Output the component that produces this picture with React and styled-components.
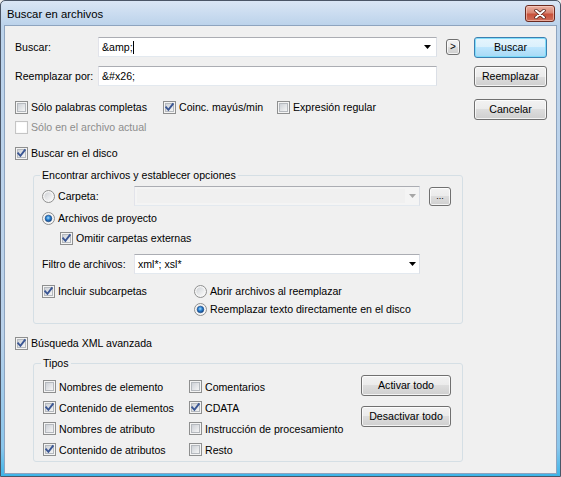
import React from "react";
import styled, { createGlobalStyle } from "styled-components";

const GlobalStyle = createGlobalStyle`
  html, body {
    margin: 0;
    padding: 0;
    background: #f0f0f0;
  }
  body {
    font-family: "Liberation Sans", Arial, sans-serif;
    font-size: 10.6px;
    color: #000;
  }
  * {
    box-sizing: border-box;
  }
`;

const Window = styled.div`
  width: 561px;
  height: 477px;
  border: 1px solid #4b5667;
  border-radius: 5px 5px 0 0;
  background: linear-gradient(
    to bottom,
    #dae6f5 0,
    #bcd3eb 24px,
    #b9d1ea 70%,
    #8ac6ec 94%,
    #3db5e8 100%
  );
  display: flex;
  flex-direction: column;
  overflow: hidden;
`;

const TitleBar = styled.div`
  height: 24px;
  flex-shrink: 0;
  display: flex;
  align-items: flex-start;
  justify-content: space-between;
  padding: 0 5px 0 6px;
`;

const Title = styled.span`
  font-size: 11.3px;
  line-height: 26px;
  color: #000;
`;

const CloseButton = styled.div`
  width: 30px;
  height: 17px;
  margin-top: 4px;
  border: 1px solid #6b2a20;
  border-radius: 3px;
  background: linear-gradient(#eab1a4, #d98673 45%, #c7513b 55%, #d0705c);
  box-shadow: inset 0 0 0 1px rgba(255, 220, 210, 0.55);
  display: flex;
  align-items: center;
  justify-content: center;
`;

const Client = styled.div`
  flex: 1;
  margin: 0 3px 2px;
  border: 1px solid #8ea4bf;
  background: #f0f0f0;
  display: flex;
  gap: 9px;
  padding: 11px 9px 0 10px;
`;

const MainColumn = styled.div`
  width: 450px;
  display: flex;
  flex-direction: column;
`;

const ButtonColumn = styled.div`
  width: 73px;
  display: flex;
  flex-direction: column;
`;

const Row = styled.div`
  display: flex;
  align-items: ${(p) => p.$align || "center"};
  height: ${(p) => (p.$h ? p.$h + "px" : "auto")};
  margin-top: ${(p) => p.$mt || 0}px;
  margin-left: ${(p) => p.$ml || 0}px;
`;

const FieldLabel = styled.span`
  width: ${(p) => p.$w}px;
  flex-shrink: 0;
  white-space: nowrap;
`;

const TextBox = styled.div`
  width: ${(p) => p.$w}px;
  height: 20px;
  flex-shrink: 0;
  border: 1px solid;
  border-color: #abadb3 #dbdfe6 #e3e9ef #e2e3ea;
  background: ${(p) => (p.$disabled ? "#f4f4f4" : "#fff")};
  display: flex;
  align-items: center;
  padding-left: 3px;
  white-space: nowrap;
`;

const BoxText = styled.span`
  flex: 1;
  display: flex;
  align-items: center;
`;

const DisabledField = styled.span`
  flex: 1;
  height: 14px;
  margin-left: -1px;
  background: #f0f0f0;
`;

const Caret = styled.span`
  display: inline-block;
  width: 1px;
  height: 13px;
  background: #000;
`;

const ArrowSlot = styled.span`
  width: ${(p) => p.$w}px;
  height: 100%;
  flex-shrink: 0;
  display: flex;
  align-items: center;
  justify-content: center;
`;

const PushButton = styled.button`
  width: ${(p) => p.$w}px;
  height: ${(p) => p.$h || 21}px;
  margin-top: ${(p) => p.$mt || 0}px;
  margin-left: ${(p) => p.$ml || 0}px;
  flex-shrink: 0;
  padding: 0;
  font: inherit;
  font-size: ${(p) => p.$fs || "inherit"};
  color: #000;
  border: 1px solid ${(p) => (p.$default ? "#3c7fb1" : "#707070")};
  border-radius: 3px;
  background: ${(p) =>
    p.$default
      ? "linear-gradient(#e6f5fd, #d9f0fc 50%, #bee6fd 50%, #a7d9f5)"
      : "linear-gradient(#f2f2f2, #ebebeb 50%, #dddddd 50%, #cfcfcf)"};
  box-shadow: inset 0 0 0 1px
    ${(p) => (p.$default ? "rgba(120, 220, 250, 0.9)" : "rgba(255, 255, 255, 0.75)")};
  display: flex;
  align-items: center;
  justify-content: center;
  line-height: 1;
`;

const OptionItem = styled.span`
  display: flex;
  align-items: center;
  gap: 3px;
  height: ${(p) => p.$h || 20}px;
  width: ${(p) => (p.$w ? p.$w + "px" : "auto")};
  flex-shrink: 0;
  margin-left: ${(p) => p.$ml || 0}px;
  margin-top: ${(p) => p.$mt || 0}px;
  color: ${(p) => (p.$disabled ? "#8d8d8d" : "#000")};
  white-space: nowrap;
  svg {
    flex-shrink: 0;
  }
`;

const Group = styled.fieldset`
  width: 430px;
  min-width: 0;
  margin: ${(p) => p.$mt}px 0 0 18px;
  padding: ${(p) => p.$pad};
  border: 1px solid #d5dfe5;
  border-radius: 3px;
`;

const GroupTitle = styled.legend`
  padding: 0 2px;
  margin-left: -2px;
  line-height: 14px;
  font-size: 10.6px;
`;

const Column = styled.div`
  display: flex;
  flex-direction: column;
  gap: ${(p) => p.$gap || 0}px;
  margin-top: ${(p) => p.$mt || 0}px;
`;

const TypesGrid = styled.div`
  display: grid;
  grid-template-columns: 146px 172px 90px;
  align-items: start;
`;

function CheckBox({ checked, disabled }) {
  const outer = disabled ? "#c5c5c5" : "#8e8f8f";
  return (
    <svg width="13" height="13" viewBox="0 0 13 13">
      <defs>
        <linearGradient id="cbFill" x1="0" y1="0" x2="1" y2="1">
          <stop offset="0" stopColor="#cbcfd5" />
          <stop offset="1" stopColor="#f7f7f7" />
        </linearGradient>
      </defs>
      <rect x="0.5" y="0.5" width="12" height="12" fill="#f4f4f4" stroke={outer} />
      {disabled ? (
        <rect x="1.5" y="1.5" width="10" height="10" fill="#fff" />
      ) : (
        <rect x="2.5" y="2.5" width="8" height="8" fill="url(#cbFill)" stroke="#b5b9be" />
      )}
      {checked && (
        <path
          d="M3.2 6.4 L5.4 8.8 L9.8 3.2"
          fill="none"
          stroke="#3a5694"
          strokeWidth="1.9"
          strokeLinecap="square"
        />
      )}
    </svg>
  );
}

function Radio({ checked }) {
  return (
    <svg width="13" height="13" viewBox="0 0 13 13">
      <defs>
        <linearGradient id="rbFill" x1="0" y1="0" x2="1" y2="1">
          <stop offset="0" stopColor="#cfd2d6" />
          <stop offset="1" stopColor="#fbfbfb" />
        </linearGradient>
        <radialGradient id="rbDot" cx="0.45" cy="0.4" r="0.6">
          <stop offset="0" stopColor="#a8dcfa" />
          <stop offset="0.5" stopColor="#2a82d2" />
          <stop offset="1" stopColor="#12417f" />
        </radialGradient>
      </defs>
      <circle cx="6.5" cy="6.5" r="6" fill="#f6f6f6" stroke="#8e8f8f" />
      <circle cx="6.5" cy="6.5" r="4.2" fill="url(#rbFill)" />
      {checked && <circle cx="6.5" cy="6.5" r="3.3" fill="url(#rbDot)" stroke="#1b4c8a" strokeWidth="0.6" />}
    </svg>
  );
}

function Arrow({ color = "#000" }) {
  return (
    <svg width="7" height="4" viewBox="0 0 7 4">
      <polygon points="0,0 7,0 3.5,4" fill={color} />
    </svg>
  );
}

function Check({ label, checked, disabled, ...rest }) {
  return (
    <OptionItem $disabled={disabled} {...rest}>
      <CheckBox checked={checked} disabled={disabled} />
      {label}
    </OptionItem>
  );
}

function Option({ label, checked, ...rest }) {
  return (
    <OptionItem {...rest}>
      <Radio checked={checked} />
      {label}
    </OptionItem>
  );
}

export default function App() {
  return (
    <>
      <GlobalStyle />
      <Window>
        <TitleBar>
          <Title>Buscar en archivos</Title>
          <CloseButton>
            <svg width="12" height="10" viewBox="0 0 12 10">
              <path d="M2 1.5 L10 8.5 M10 1.5 L2 8.5" stroke="#4a1a12" strokeWidth="3.4" strokeLinecap="round" />
              <path d="M2 1.5 L10 8.5 M10 1.5 L2 8.5" stroke="#fff" strokeWidth="2" strokeLinecap="round" />
            </svg>
          </CloseButton>
        </TitleBar>

        <Client>
          <MainColumn>
            <Row $h={20}>
              <FieldLabel $w={83}>Buscar:</FieldLabel>
              <TextBox $w={339}>
                <BoxText>
                  &amp;amp;
                  <Caret />
                </BoxText>
                <ArrowSlot $w={18}>
                  <Arrow />
                </ArrowSlot>
              </TextBox>
              <PushButton $w={14} $h={16} $ml={9} $fs="10px">
                &gt;
              </PushButton>
            </Row>

            <Row $h={20} $mt={9}>
              <FieldLabel $w={83}>Reemplazar por:</FieldLabel>
              <TextBox $w={339}>&amp;#x26;</TextBox>
            </Row>

            <Row $h={20} $mt={11}>
              <Check $w={148} label="Sólo palabras completas" />
              <Check $w={114} checked label="Coinc. mayús/min" />
              <Check label="Expresión regular" />
            </Row>

            <Row $h={20}>
              <Check disabled label="Sólo en el archivo actual" />
            </Row>

            <Row $h={20} $mt={6}>
              <Check checked label="Buscar en el disco" />
            </Row>

            <Group $mt={5} $pad="4px 8px 5px 8px">
              <GroupTitle>Encontrar archivos y establecer opciones</GroupTitle>
              <Row $h={20}>
                <Option $w={92} label="Carpeta:" />
                <TextBox $w={286} $disabled>
                  <DisabledField />
                  <ArrowSlot $w={14}>
                    <Arrow color="#a6a6a6" />
                  </ArrowSlot>
                </TextBox>
                <PushButton $w={22} $h={19} $ml={9} $fs="9px">
                  ...
                </PushButton>
              </Row>
              <Row $h={20} $mt={2}>
                <Option checked label="Archivos de proyecto" />
              </Row>
              <Row $h={20} $ml={18}>
                <Check checked label="Omitir carpetas externas" />
              </Row>
              <Row $h={20} $mt={6}>
                <FieldLabel $w={92}>Filtro de archivos:</FieldLabel>
                <TextBox $w={286}>
                  <BoxText>xml*; xsl*</BoxText>
                  <ArrowSlot $w={14}>
                    <Arrow />
                  </ArrowSlot>
                </TextBox>
              </Row>
              <Row $mt={8} $align="flex-start">
                <Check $w={152} $h={18} checked label="Incluir subcarpetas" />
                <Column>
                  <Option $h={18} label="Abrir archivos al reemplazar" />
                  <Option $h={18} checked label="Reemplazar texto directamente en el disco" />
                </Column>
              </Row>
            </Group>

            <Row $h={20} $mt={9}>
              <Check checked label="Búsqueda XML avanzada" />
            </Row>

            <Group $mt={3} $pad="6px 8px 1px 9px">
              <GroupTitle>Tipos</GroupTitle>
              <TypesGrid>
                <Column>
                  <Check $h={21} label="Nombres de elemento" />
                  <Check $h={21} checked label="Contenido de elementos" />
                  <Check $h={21} label="Nombres de atributo" />
                  <Check $h={21} checked label="Contenido de atributos" />
                </Column>
                <Column>
                  <Check $h={21} label="Comentarios" />
                  <Check $h={21} checked label="CDATA" />
                  <Check $h={21} label="Instrucción de procesamiento" />
                  <Check $h={21} label="Resto" />
                </Column>
                <Column $gap={10} $mt={-1}>
                  <PushButton $w={90}>Activar todo</PushButton>
                  <PushButton $w={90}>Desactivar todo</PushButton>
                </Column>
              </TypesGrid>
            </Group>
          </MainColumn>

          <ButtonColumn>
            <PushButton $w={73} $default>
              Buscar
            </PushButton>
            <PushButton $w={73} $mt={8}>
              Reemplazar
            </PushButton>
            <PushButton $w={73} $mt={12}>
              Cancelar
            </PushButton>
          </ButtonColumn>
        </Client>
      </Window>
    </>
  );
}
